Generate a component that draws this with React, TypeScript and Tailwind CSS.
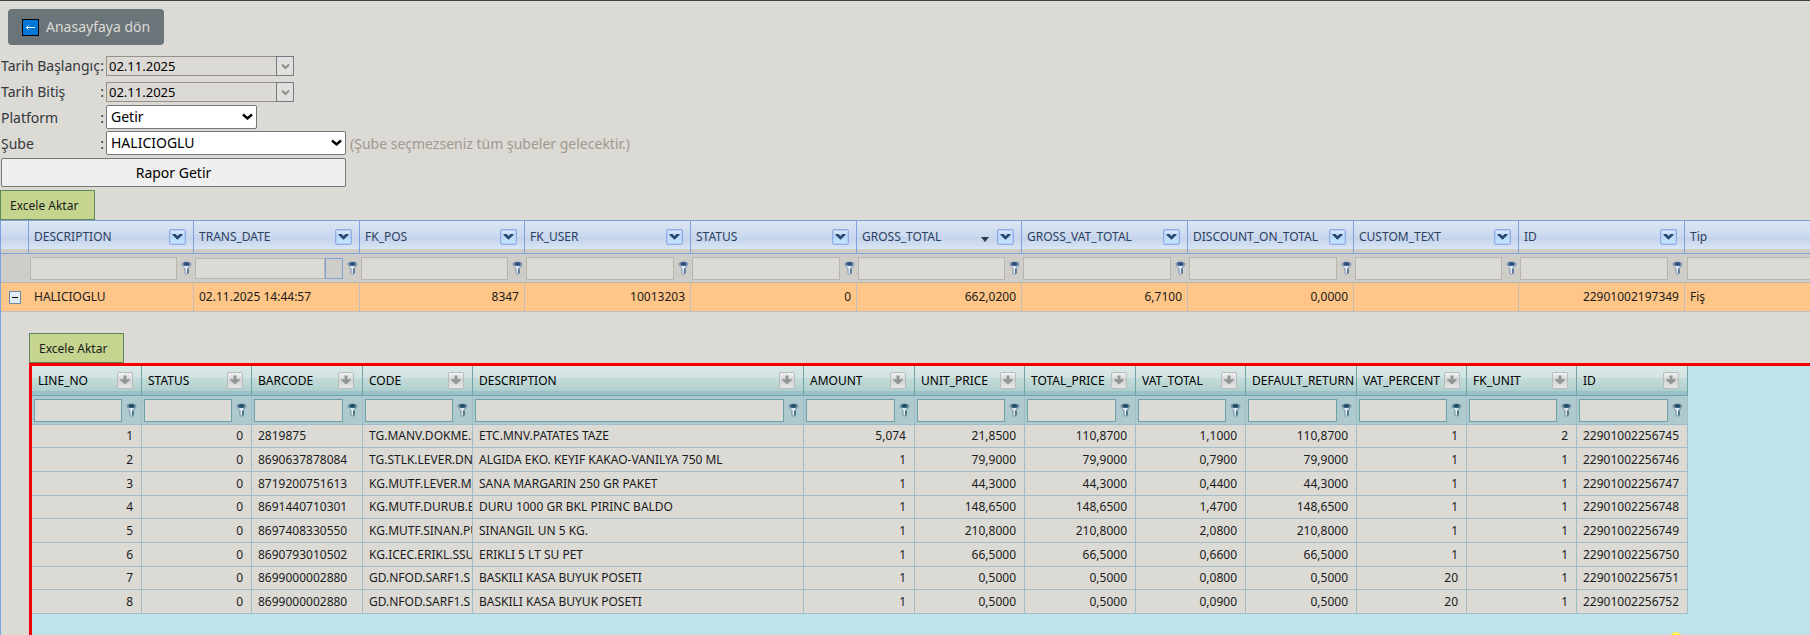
import React, { useState } from 'react';

interface Column {
  name: string;
  width: string;
  align?: 'right';
  kind?: 'date' | 'sorted' | 'open';
}

const receiptColumns: Column[] = [
  { name: 'DESCRIPTION', width: 'w-[165px]' },
  { name: 'TRANS_DATE', width: 'w-[166px]', kind: 'date' },
  { name: 'FK_POS', width: 'w-[165px]', align: 'right' },
  { name: 'FK_USER', width: 'w-[166px]', align: 'right' },
  { name: 'STATUS', width: 'w-[166px]', align: 'right' },
  { name: 'GROSS_TOTAL', width: 'w-[165px]', align: 'right', kind: 'sorted' },
  { name: 'GROSS_VAT_TOTAL', width: 'w-[166px]', align: 'right' },
  { name: 'DISCOUNT_ON_TOTAL', width: 'w-[166px]', align: 'right' },
  { name: 'CUSTOM_TEXT', width: 'w-[165px]' },
  { name: 'ID', width: 'w-[166px]', align: 'right' },
  { name: 'Tip', width: 'w-auto', kind: 'open' },
];

const receipt = ['HALICIOGLU', '02.11.2025 14:44:57', '8347', '10013203', '0', '662,0200', '6,7100', '0,0000', '', '22901002197349', 'Fiş'];

const lineColumns: Column[] = [
  { name: 'LINE_NO', width: 'w-[110px]', align: 'right' },
  { name: 'STATUS', width: 'w-[110px]', align: 'right' },
  { name: 'BARCODE', width: 'w-[111px]' },
  { name: 'CODE', width: 'w-[110px]' },
  { name: 'DESCRIPTION', width: 'w-[331px]' },
  { name: 'AMOUNT', width: 'w-[111px]', align: 'right' },
  { name: 'UNIT_PRICE', width: 'w-[110px]', align: 'right' },
  { name: 'TOTAL_PRICE', width: 'w-[111px]', align: 'right' },
  { name: 'VAT_TOTAL', width: 'w-[110px]', align: 'right' },
  { name: 'DEFAULT_RETURN', width: 'w-[111px]', align: 'right' },
  { name: 'VAT_PERCENT', width: 'w-[110px]', align: 'right' },
  { name: 'FK_UNIT', width: 'w-[110px]', align: 'right' },
  { name: 'ID', width: 'w-[111px]' },
];

const lines = [
  ['1', '0', '2819875', 'TG.MANV.DOKME.S', 'ETC.MNV.PATATES TAZE', '5,074', '21,8500', '110,8700', '1,1000', '110,8700', '1', '2', '22901002256745'],
  ['2', '0', '8690637878084', 'TG.STLK.LEVER.DN', 'ALGIDA EKO. KEYIF KAKAO-VANILYA 750 ML', '1', '79,9000', '79,9000', '0,7900', '79,9000', '1', '1', '22901002256746'],
  ['3', '0', '8719200751613', 'KG.MUTF.LEVER.M', 'SANA MARGARIN 250 GR PAKET', '1', '44,3000', '44,3000', '0,4400', '44,3000', '1', '1', '22901002256747'],
  ['4', '0', '8691440710301', 'KG.MUTF.DURUB.B', 'DURU 1000 GR BKL PIRINC BALDO', '1', '148,6500', '148,6500', '1,4700', '148,6500', '1', '1', '22901002256748'],
  ['5', '0', '8697408330550', 'KG.MUTF.SINAN.PU', 'SINANGIL UN 5 KG.', '1', '210,8000', '210,8000', '2,0800', '210,8000', '1', '1', '22901002256749'],
  ['6', '0', '8690793010502', 'KG.ICEC.ERIKL.SSU', 'ERIKLI 5 LT SU PET', '1', '66,5000', '66,5000', '0,6600', '66,5000', '1', '1', '22901002256750'],
  ['7', '0', '8699000002880', 'GD.NFOD.SARF1.S', 'BASKILI KASA BUYUK POSETI', '1', '0,5000', '0,5000', '0,0800', '0,5000', '20', '1', '22901002256751'],
  ['8', '0', '8699000002880', 'GD.NFOD.SARF1.S', 'BASKILI KASA BUYUK POSETI', '1', '0,5000', '0,5000', '0,0900', '0,5000', '20', '1', '22901002256752'],
];

const FunnelIcon = ({ dark, light }: { dark: string; light: string }) => (
  <svg width="11" height="14" viewBox="0 0 11 14" aria-hidden="true">
    <path d="M0.5 3C0.5 1.4 2.6 0.5 5.5 0.5S10.5 1.4 10.5 3C10.5 4.6 8.9 5.6 7.6 7.4V12.2L6.4 13.5H4.6L3.4 12.2V7.4C2.1 5.6 0.5 4.6 0.5 3Z" fill={light} />
    <path d="M2 4.8L4.6 7.6V12.4H5.9V7.6L8.6 4.8C7.4 5.5 3.6 5.5 2 4.8Z" fill="#f2f6fa" />
    <ellipse cx="5.5" cy="2.9" rx="2.9" ry="1.9" fill={dark} />
    <path d="M7 8V12.4" stroke={dark} strokeWidth="1" fill="none" />
  </svg>
);

const MenuButton = ({ name }: { name: string }) => (
  <button type="button" aria-label={`${name} menü`} className="h-4 w-[17px] shrink-0 cursor-pointer">
    <svg width="17" height="16" viewBox="0 0 17 16">
      <defs>
        <linearGradient id="menuFill" x1="0" y1="0" x2="0" y2="1">
          <stop offset="0" stopColor="#dfeaf8" />
          <stop offset="0.5" stopColor="#b9d7f8" />
          <stop offset="1" stopColor="#c6e9ff" />
        </linearGradient>
      </defs>
      <rect x="0.5" y="0.5" width="16" height="15" rx="1.5" fill="url(#menuFill)" stroke="#93abe6" />
      <rect x="1.5" y="1.5" width="14" height="13" fill="none" stroke="#b4cdf5" />
      <path d="M3.5 5H6.5L8.5 7L10.5 5H13.5V6L8.5 10.8L3.5 6Z" fill="#27486f" />
    </svg>
  </button>
);

const SortButton = ({ name }: { name: string }) => (
  <button type="button" aria-label={`${name} sırala`} className="h-[17px] w-4 shrink-0 cursor-pointer">
    <svg width="16" height="17" viewBox="0 0 16 17">
      <defs>
        <linearGradient id="sortFill" x1="0" y1="0" x2="0" y2="1">
          <stop offset="0" stopColor="#f5f5f5" />
          <stop offset="0.5" stopColor="#d2d2d2" />
          <stop offset="1" stopColor="#e8e8e8" />
        </linearGradient>
      </defs>
      <rect x="0.5" y="0.5" width="15" height="16" rx="1.5" fill="url(#sortFill)" stroke="#b7bcbc" />
      <path d="M6.5 3.5H9.5V7.5L12.5 6.5V8.5L8 12.5L3.5 8.5V6.5L6.5 7.5Z" fill="#909695" />
    </svg>
  </button>
);

const ExportButton = () => (
  <button type="button" className="h-[30px] w-[95px] cursor-pointer border border-[#5f865c] bg-[#c5d58f] pt-px pl-[9px] text-left text-xs text-[#1b1b1b]">
    Excele Aktar
  </button>
);

const FieldLabel = ({ id, label }: { id: string; label: string }) => (
  <label htmlFor={id} className="flex w-[106px] shrink-0 justify-between self-center pr-[2px] pl-px">
    <span>{label}</span>
    <span>:</span>
  </label>
);

const DateField = ({ id, label }: { id: string; label: string }) => {
  const [value, setValue] = useState('02.11.2025');

  return (
    <div className="flex h-[26px] items-center">
      <FieldLabel id={id} label={label} />
      <div className="flex h-5 w-[188px]">
        <input
          id={id}
          value={value}
          onChange={(e) => setValue(e.target.value)}
          className="min-w-0 flex-1 border border-r-0 border-[#979086] pl-[2px] text-[13px] text-black outline-none"
        />
        <button type="button" aria-label={`${label} takvim`} className="flex w-[18px] items-center justify-center border border-[#707b85] bg-[#e1e0dd]">
          <svg width="9" height="7" viewBox="0 0 9 7">
            <path d="M1 1.5L4.5 5L8 1.5" fill="none" stroke="#8d8d8d" strokeWidth="2" />
          </svg>
        </button>
      </div>
    </div>
  );
};

const SelectField = ({ id, label, value, width }: { id: string; label: string; value: string; width: string }) => (
  <div className="flex h-[26px] items-start">
    <FieldLabel id={id} label={label} />
    <div className={`relative ${width}`}>
      <select id={id} defaultValue={value} className="block h-6 w-full appearance-none rounded-[2px] border border-[#767676] bg-white pl-1 text-black">
        <option>{value}</option>
      </select>
      <svg width="11" height="8" viewBox="0 0 11 8" className="pointer-events-none absolute top-2 right-1">
        <path d="M1 1.5L5.5 5.5L10 1.5" fill="none" stroke="#000" strokeWidth="2.4" />
      </svg>
    </div>
  </div>
);

const ReceiptTable = () => (
  <table className="w-full table-fixed border-separate border-spacing-0 text-xs whitespace-nowrap text-[#1b1b1b]">
    <colgroup>
      <col className="w-7" />
      {receiptColumns.map((c) => (
        <col key={c.name} className={c.width} />
      ))}
    </colgroup>
    <thead>
      <tr className="text-left text-[#2b3f5f]">
        <th className="h-[34px] border border-l-0 border-[#7ea2dd] bg-[linear-gradient(#dce6f3_0,#cad8ee_16px,#c3d3ec_17px,#dbe6f5_28px,#cfcdc8_28px)]" />
        {receiptColumns.map((c) => (
          <th
            key={c.name}
            className={`h-[34px] overflow-hidden border-y border-[#7ea2dd] bg-[linear-gradient(#dce6f3_0,#cad8ee_16px,#c3d3ec_17px,#dbe6f5_28px,#cfcdc8_28px)] pr-[7px] pl-[5px] font-normal ${c.kind === 'open' ? '' : 'border-r'}`}
          >
            <div className="flex items-center gap-2">
              <span className="min-w-0 flex-1">{c.name}</span>
              {c.kind === 'sorted' && (
                <svg width="8" height="5" viewBox="0 0 8 5" className="mt-1">
                  <path d="M0 0H8L4 5Z" fill="#2f3a4a" />
                </svg>
              )}
              {c.kind !== 'open' && <MenuButton name={c.name} />}
            </div>
          </th>
        ))}
      </tr>
      <tr className="bg-[#cfcdc8]">
        <td className="h-[29px] border-b border-[#b8b6ad]" />
        {receiptColumns.map((c) => (
          <td key={c.name} className={`h-[29px] border-b border-[#b8b6ad] ${c.kind === 'open' ? 'pl-[2px]' : 'pr-[2px] pl-px'}`}>
            <div className="flex items-center">
              <input
                aria-label={`${c.name} filtre`}
                className={`min-w-0 flex-1 border border-[#b8b6ad] bg-[#dcdad5] px-1 outline-none ${c.kind === 'date' ? 'h-[21px]' : 'h-[23px]'} ${c.kind === 'open' ? 'border-r-0' : ''}`}
              />
              {c.kind === 'date' && <button type="button" aria-label="Tarih seç" className="h-[21px] w-[18px] border border-[#7ea2dd]" />}
              {c.kind !== 'open' && (
                <button type="button" aria-label={`${c.name} filtrele`} className="ml-1 shrink-0">
                  <FunnelIcon dark="#2f517f" light="#8499b5" />
                </button>
              )}
            </div>
          </td>
        ))}
      </tr>
    </thead>
    <tbody>
      <tr className="bg-[#ffc688]">
        <td className="h-[29px] border-b border-[#bdbdba]">
          <button type="button" aria-label="Daralt" className="mx-auto flex h-[13px] w-3 items-center justify-center border border-[#6d8bab] bg-[#e0ebf4]">
            <span className="h-px w-1.5 bg-black" />
          </button>
        </td>
        {receipt.map((value, i) => (
          <td
            key={receiptColumns[i].name}
            className={`h-[29px] border-b border-[#bdbdba] pr-[5px] pl-[5px] ${i < receipt.length - 1 ? 'border-r' : ''} ${receiptColumns[i].align === 'right' ? 'text-right' : ''}`}
          >
            {value}
          </td>
        ))}
      </tr>
    </tbody>
  </table>
);

const LinesTable = () => (
  <table className="w-[1656px] table-fixed border-separate border-spacing-0 text-xs whitespace-nowrap text-[#1b1b1b]">
    <colgroup>
      {lineColumns.map((c) => (
        <col key={c.name} className={c.width} />
      ))}
    </colgroup>
    <thead>
      <tr className="text-left text-black">
        {lineColumns.map((c) => (
          <th
            key={c.name}
            className="h-[30px] overflow-hidden border-r border-b border-[#6fa3a8] bg-[linear-gradient(#dbe9e8_0,#d3e4e2_11px,#c5dcda_12px,#afcfcc_25px,#98c2c8_25px)] pr-2 pl-1.5 font-normal"
          >
            <div className="flex items-center justify-between gap-1">
              <span>{c.name}</span>
              <SortButton name={c.name} />
            </div>
          </th>
        ))}
      </tr>
      <tr className="bg-[#aecace]">
        {lineColumns.map((c) => (
          <td key={c.name} className="h-[29px] border-r border-b border-[#a0bec8] pr-1 pl-[2px]">
            <div className="flex items-center gap-1">
              <input aria-label={`${c.name} filtre`} className="h-[23px] min-w-0 flex-1 border border-[#6ba0a8] bg-[#dcdad5] px-1 outline-none" />
              <button type="button" aria-label={`${c.name} filtrele`} className="shrink-0">
                <FunnelIcon dark="#1f4e66" light="#7797a6" />
              </button>
            </div>
          </td>
        ))}
      </tr>
    </thead>
    <tbody className="bg-[#dcdad5]">
      {lines.map((line) => (
        <tr key={line[0]} className="h-6 nth-[3n+1]:h-[23px]">
          {line.map((value, i) => (
            <td
              key={lineColumns[i].name}
              className={`overflow-hidden border-r border-b border-[#a0bec8] pl-1.5 ${lineColumns[i].align === 'right' ? 'pr-2 text-right' : ''}`}
            >
              {value}
            </td>
          ))}
        </tr>
      ))}
    </tbody>
  </table>
);

export default function App() {
  return (
    <div className="flex min-h-screen flex-col overflow-hidden border-t border-[#404040] bg-[#dcdad5] font-['Noto_Sans',sans-serif] text-sm text-[#33373b]">
      <div className="px-2 pt-2">
        <a href="#" className="inline-flex h-9 w-[156px] items-center gap-[7px] rounded bg-[#6b7479] pl-3.5 text-[#dcdad5]">
          <svg width="17" height="17" viewBox="0 0 17 17" aria-hidden="true">
            <rect x="0.5" y="0.5" width="16" height="16" fill="#0078d7" stroke="#000" />
            <path d="M4 8.5H13M6.5 6.5L4.5 8.5L6.5 10.5" stroke="#fff" fill="none" />
          </svg>
          Anasayfaya dön
        </a>
      </div>

      <form className="mt-2" onSubmit={(e) => e.preventDefault()}>
        <DateField id="start" label="Tarih Başlangıç" />
        <DateField id="end" label="Tarih Bitiş" />
        <SelectField id="platform" label="Platform" value="Getir" width="w-[151px]" />
        <div className="flex items-center">
          <SelectField id="branch" label="Şube" value="HALICIOGLU" width="w-60" />
          <span className="ml-1 text-[#a0998f]">(Şube seçmezseniz tüm şubeler gelecektir.)</span>
        </div>
        <button type="submit" className="mt-px ml-px block h-[29px] w-[345px] rounded-[2px] border border-[#767676] bg-[#efefef] text-black">
          Rapor Getir
        </button>
      </form>

      <div className="mt-[3px] flex">
        <ExportButton />
      </div>

      <div className="flex flex-1 flex-col border-l border-[#7ea2dd]">
        <ReceiptTable />
        <div className="flex flex-1 flex-col pt-[21px] pl-7">
          <ExportButton />
          <div className="relative flex-1 overflow-hidden border-t-[3px] border-l-[3px] border-[#f50000] bg-[#c0e2e9]">
            <LinesTable />
            <svg width="10" height="3" viewBox="0 0 10 3" className="absolute right-[129px] bottom-0" aria-hidden="true">
              <path d="M0 3C1 1 3 0 5 0S9 1 10 3Z" fill="#ffee33" />
              <path d="M4 2C5 1 7 1 8 2" stroke="#fffbc0" fill="none" />
            </svg>
          </div>
        </div>
      </div>
    </div>
  );
}
